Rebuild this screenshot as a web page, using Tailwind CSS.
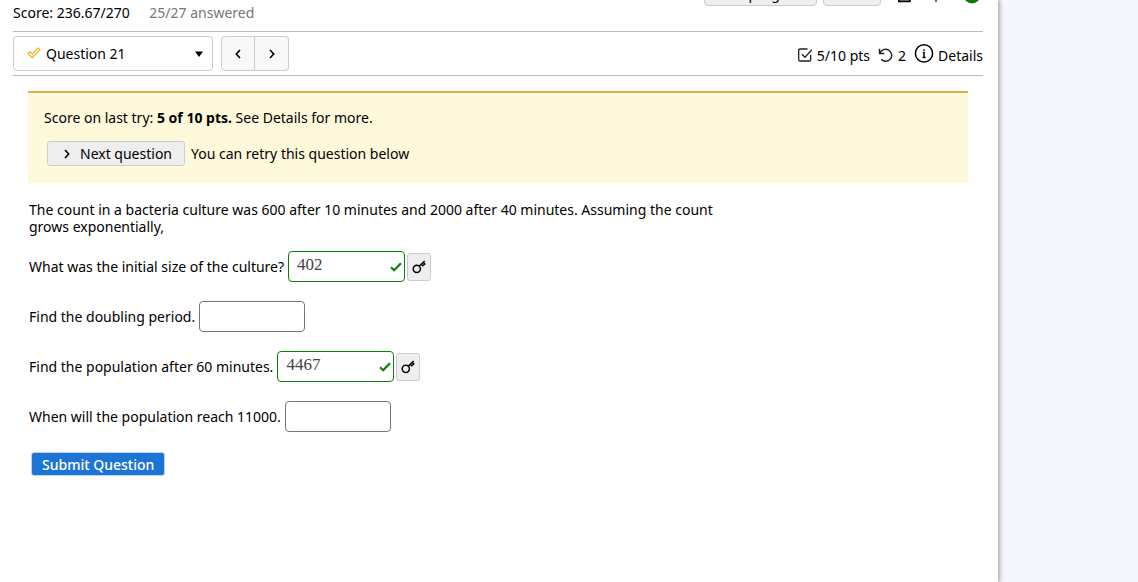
<!DOCTYPE html>
<html lang="en">
<head>
    <meta charset="UTF-8">
    <meta name="viewport" content="width=device-width, initial-scale=1.0">
    <title>Question 21</title>
    <script src="https://cdn.jsdelivr.net/npm/@tailwindcss/browser@4"></script>
</head>
<body class="flex min-h-screen overflow-hidden bg-[#f6f6ff] font-['Trebuchet_MS','Noto_Sans',sans-serif] text-[14px] leading-[17px] text-black">
    <main class="mr-[140px] grow bg-white pr-[15px] pl-[13px] shadow-[2px_0_4px_#aaa]">
        <!-- Assessment header -->
        <header class="flex h-8 items-start justify-between border-b border-[#bbb]">
            <p class="pt-1">Score: 236.67/270 <span class="ml-4 text-[#777]">25/27 answered</span></p>
            <div class="flex h-[6px] items-end overflow-hidden">
                <button type="button" class="h-[25px] w-[113px] rounded-[4px] border border-[#ccc] bg-[#eee]">Save progress</button>
                <button type="button" aria-label="Print" class="ml-[6px] h-[25px] w-[58px] rounded-[4px] border border-[#ccc] bg-[#eee]"></button>
                <svg class="mr-[3px] ml-4 h-[6px] w-[83px]" viewBox="0 0 83 6">
                    <path d="M1.8-8V1.5H13V-8" fill="#888" stroke="#000" stroke-width="1.5"/>
                    <path d="M39-6V2" stroke="#0a7a0a" stroke-width="1.6"/>
                    <circle cx="75" cy="-5" r="8.4" fill="#0a7a0a"/>
                </svg>
            </div>
        </header>

        <!-- Question picker -->
        <nav class="flex h-11 items-center border-b border-[#bbb]">
            <div class="relative">
                <select id="question" aria-label="Question" class="h-[35px] w-[200px] appearance-none rounded-[4px] border border-[#ccc] bg-white pl-8">
                    <option>Question 21</option>
                </select>
                <svg class="pointer-events-none absolute top-[11px] left-[14px] h-3 w-[14px]" viewBox="0 0 14 12" fill="none" stroke="#f0b92c" stroke-linejoin="round"><path d="M1 6.5 3 4.7 5.2 7 11 1 13 2.8 5.2 10.8Z" stroke-width="1.3"/></svg>
                <svg class="pointer-events-none absolute top-[15px] right-[10px] h-[6px] w-2" viewBox="0 0 8 6"><path d="M0 .5h8L4 6Z"/></svg>
            </div>
            <div class="ml-2 flex">
                <button type="button" aria-label="Previous question" class="flex h-[35px] w-[34px] items-center justify-center rounded-l-[4px] border border-[#ccc] bg-[#f8f8f8]">
                    <svg class="h-[10px] w-[6px]" viewBox="0 0 6 10" fill="none" stroke="#000" stroke-width="1.6"><path d="M5 1 1.3 5 5 9"/></svg>
                </button>
                <button type="button" aria-label="Next question" class="flex h-[35px] w-[34px] items-center justify-center rounded-r-[4px] border border-l-0 border-[#ccc] bg-[#f8f8f8]">
                    <svg class="h-[10px] w-[6px]" viewBox="0 0 6 10" fill="none" stroke="#000" stroke-width="1.6"><path d="M1 1 4.7 5 1 9"/></svg>
                </button>
            </div>
            <button type="button" class="ml-auto flex items-end">
                <svg class="mr-1 h-4 w-4" viewBox="0 0 16 16" fill="none" stroke="#222" stroke-width="1.3"><path d="M10.5 1H3Q1.7 1 1.7 2.3v9.4Q1.7 13 3 13h9.4q1.3 0 1.3-1.3V7M5 6.2l3 3 6.8-7.4"/></svg>
                5/10 pts
                <svg class="mr-1 ml-2 h-4 w-4" viewBox="0 0 16 16" fill="none" stroke="#222" stroke-width="1.4"><path d="M1.5.8v4.7h4.7M2 5.3a6 6 0 1 1 1.2 6"/></svg>
                2
                <svg class="mr-1 ml-2 h-5 w-5" viewBox="0 0 20 20" fill="none" stroke="#000" stroke-width="1.5"><circle cx="10" cy="9.4" r="8.6"/><path d="M8.8 8.4H10v5M8.6 13.4h3M10 5.2v1.6"/></svg>
                Details
            </button>
        </nav>

        <section class="mx-[15px] mt-[15px] border-t-2 border-[#e0ad4d] bg-[#fff9dc] px-4 pt-4 pb-[17px]">
            <p>Score on last try: <b>5 of 10 pts.</b> See Details for more.</p>
            <div class="mt-[15px] ml-[3px] flex items-center gap-[6px]">
                <button type="button" class="flex h-[25px] items-center rounded-[3px] border border-[#ccc] bg-[#eee] pr-3 pl-4">
                    <svg class="mr-[10px] h-[10px] w-[6px]" viewBox="0 0 6 10" fill="none" stroke="#000" stroke-width="1.6"><path d="M1 1 4.7 5 1 9"/></svg>
                    Next question
                </button>
                <span>You can retry this question below</span>
            </div>
        </section>

        <form class="mx-4 mt-[18px]">
            <p class="max-w-[700px]">The count in a bacteria culture was 600 after 10 minutes and 2000 after 40 minutes. Assuming the count grows exponentially,</p>
            <div class="mt-4 grid gap-[19px]">
                <div class="flex h-[31px] items-center">
                    <label for="initial" class="mr-1">What was the initial size of the culture?</label>
                    <div class="relative">
                        <input id="initial" value="402" class="block h-[31px] w-[117px] rounded-[4px] border border-[#0a800a] px-2 pb-[3px] font-['Liberation_Serif',serif] text-[17px] text-[#444]">
                        <svg class="absolute right-[3px] bottom-[10px] h-[10px] w-3" viewBox="0 0 12 10" fill="none" stroke="#0a800a" stroke-width="2.2"><path d="M1 5.2 4.2 8.3 11 1.2"/></svg>
                    </div>
                    <button type="button" aria-label="Show answer" class="ml-[2px] flex h-[28px] w-6 items-center justify-center rounded-[3px] border border-[#ccc] bg-[#eee]">
                        <svg class="h-[14px] w-[14px]" viewBox="0 0 14 14" fill="none" stroke="#000" stroke-width="1.5"><circle cx="4.8" cy="8.8" r="3.6"/><path d="M7.2 6.2 12.6 1M9.2 4.3 10.8 5.8 12.8 4 11.4 2.4"/></svg>
                    </button>
                </div>
                <div class="flex h-[31px] items-center">
                    <label for="doubling" class="mr-1">Find the doubling period.</label>
                    <input id="doubling" class="h-[31px] w-[106px] rounded-[4px] border border-[#777] px-2">
                </div>
                <div class="flex h-[31px] items-center">
                    <label for="population" class="mr-1">Find the population after 60 minutes.</label>
                    <div class="relative">
                        <input id="population" value="4467" class="block h-[31px] w-[117px] rounded-[4px] border border-[#0a800a] px-2 pb-[3px] font-['Liberation_Serif',serif] text-[17px] text-[#444]">
                        <svg class="absolute right-[3px] bottom-[10px] h-[10px] w-3" viewBox="0 0 12 10" fill="none" stroke="#0a800a" stroke-width="2.2"><path d="M1 5.2 4.2 8.3 11 1.2"/></svg>
                    </div>
                    <button type="button" aria-label="Show answer" class="ml-[2px] flex h-[28px] w-6 items-center justify-center rounded-[3px] border border-[#ccc] bg-[#eee]">
                        <svg class="h-[14px] w-[14px]" viewBox="0 0 14 14" fill="none" stroke="#000" stroke-width="1.5"><circle cx="4.8" cy="8.8" r="3.6"/><path d="M7.2 6.2 12.6 1M9.2 4.3 10.8 5.8 12.8 4 11.4 2.4"/></svg>
                    </button>
                </div>
                <div class="flex h-[31px] items-center">
                    <label for="reach" class="mr-1">When will the population reach 11000.</label>
                    <input id="reach" class="h-[31px] w-[106px] rounded-[4px] border border-[#777] px-2">
                </div>
            </div>
            <button type="button" class="mt-5 ml-[2px] h-6 rounded-[3px] border border-[#b9d3f0] bg-[#1c75d4] px-[10px] font-medium text-white">Submit Question</button>
        </form>
    </main>
</body>
</html>
